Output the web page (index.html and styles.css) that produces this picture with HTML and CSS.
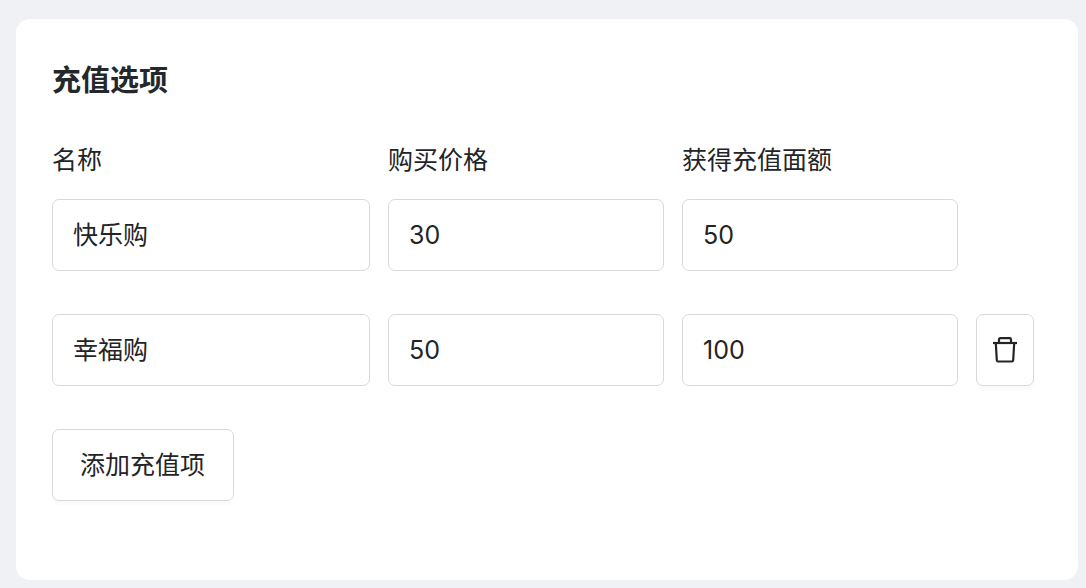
FILE: index.html
```
<!DOCTYPE html>
<html lang="zh-CN">
<head>
    <meta charset="UTF-8">
    <meta name="viewport" content="width=device-width, initial-scale=1.0">
    <title>充值选项</title>
    <link rel="stylesheet" href="styles.css">
</head>
<body>

<form class="card">
    <h1 class="title">充值选项</h1>

    <div class="options">
        <label class="label" for="name1">名称</label>
        <label class="label" for="price1">购买价格</label>
        <label class="label" for="amount1">获得充值面额</label>

        <!-- Option 1 -->
        <input class="input input-name" id="name1" type="text" value="快乐购">
        <input class="input" id="price1" type="text" value="30">
        <input class="input" id="amount1" type="text" value="50">

        <!-- Option 2 -->
        <input class="input input-name" type="text" value="幸福购" aria-label="名称">
        <input class="input" type="text" value="50" aria-label="购买价格">
        <input class="input" type="text" value="100" aria-label="获得充值面额">
        <button class="btn btn-delete" type="button" aria-label="删除">
            <svg class="icon" viewBox="0 0 28 28" aria-hidden="true">
                <path d="M2 7H26"/>
                <path d="M8 7V3.500Q8 2.200 9.300 2.200H18.700Q20 2.200 20 3.500V7"/>
                <path d="M4.800 7L5.800 24.200Q5.900 25.500 7.200 25.500H20.800Q22.100 25.500 22.200 24.200L23.200 7"/>
            </svg>
        </button>
    </div>

    <button class="btn btn-add" type="button">添加充值项</button>
</form>

</body>
</html>
```

FILE: styles.css
```
* {
    box-sizing: border-box;
}
body {
    margin: 0;
    padding: 19px 8px 8px 16px;
    background: #f0f1f5;
    color: #232426;
    font-family: Inter, "Noto Sans CJK SC", sans-serif;
    font-size: 25px;
}
.card {
    background: #ffffff;
    border-radius: 14px;
    padding: 41px 44px 79px 36px;
}
.title {
    margin: 0 0 39px;
    color: #25282b;
    font-size: 29px;
    line-height: 42px;
    font-weight: 700;
}
.options {
    display: grid;
    grid-template-columns: 318fr 276fr 276fr 58px;
    column-gap: 18px;
}
.label {
    line-height: 38px;
    margin-bottom: 20px;
}
.input {
    width: 100%;
    min-width: 0;
    height: 72px;
    margin: 0 0 43px;
    padding: 0 20px;
    border: 1px solid #d9d9d9;
    border-radius: 7px;
    background: #ffffff;
    color: inherit;
    font: inherit;
}
/* each option starts on a new row */
.input-name {
    grid-column: 1;
    padding-bottom: 4px;
}
.btn {
    height: 72px;
    padding: 0 28px 4px 27px;
    border: 1px solid #d9d9d9;
    border-radius: 7px;
    background: #ffffff;
    box-shadow: 0 4px 2px rgba(0, 0, 0, 0.02);
    color: inherit;
    font: inherit;
    cursor: pointer;
}
.btn-delete {
    display: flex;
    align-items: center;
    justify-content: center;
    padding: 0;
}
.icon {
    width: 28px;
    height: 28px;
    fill: none;
    stroke: currentColor;
    stroke-width: 2.2;
    stroke-linejoin: round;
}
```
